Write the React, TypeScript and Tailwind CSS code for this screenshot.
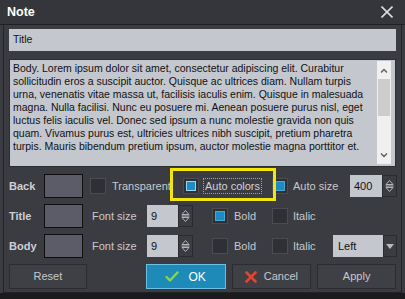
import React from "react";

const bodyLines = [
  "Body. Lorem ipsum dolor sit amet, consectetur adipiscing elit. Curabitur",
  "sollicitudin eros a suscipit auctor. Quisque ac ultrices diam. Nullam turpis",
  "urna, venenatis vitae massa ut, facilisis iaculis enim. Quisque in malesuada",
  "magna. Nulla facilisi. Nunc eu posuere mi. Aenean posuere purus nisl, eget",
  "luctus felis iaculis vel. Donec sed ipsum a nunc molestie gravida non quis",
  "quam. Vivamus purus est, ultricies ultrices nibh suscipit, pretium pharetra",
  "turpis. Mauris bibendum pretium ipsum, auctor molestie magna porttitor et.",
];

const Check = ({ on = false, focus = false }: { on?: boolean; focus?: boolean }) => (
  <div className="w-[16px] h-[16px] shrink-0 bg-[#2f3034] border border-[#4b4c52] flex items-center justify-center">
    {on && (
      <div
        className={`w-[10px] h-[10px] bg-[#1e8cc4] border ${
          focus ? "border-[#9ad6f2]" : "border-[#4aa6d2]"
        }`}
      />
    )}
  </div>
);

const Swatch = () => (
  <div className="w-[39px] h-[24px] shrink-0 bg-[#5b5c67] border border-[#0e0e10]" />
);

const Spin = ({ value, w }: { value: string; w: string }) => (
  <div className="flex h-[22px] shrink-0">
    <div className={`${w} bg-[#c4c7ce] text-[#111] text-[11px] pl-[4px] flex items-center`}>
      {value}
    </div>
    <div className="w-[15px] bg-[#3b3c42] border border-[#2a2b2f] flex items-center justify-center">
      <svg width="9" height="14" viewBox="0 0 9 14" fill="none" stroke="#b4b5ba" strokeWidth="1">
        <path d="M1 5.5 L4.5 1.5 L8 5.5 Z" />
        <path d="M0.5 7 H8.5" />
        <path d="M1 8.5 L4.5 12.5 L8 8.5 Z" />
      </svg>
    </div>
  </div>
);

const Label = ({ children }: { children: React.ReactNode }) => (
  <div className="w-[35px] shrink-0 text-[11px] font-bold text-[#cfcfd2]">{children}</div>
);

export default function App() {
  return (
    <div className="w-[405px] h-[299px] bg-[#1b1b1d] overflow-hidden font-['Liberation_Sans',Arial,sans-serif] select-none">
      {/* Title bar */}
      <div className="h-[25px] bg-[#35363b] border-b border-[#1f2023] flex items-center justify-between pl-[7px] pr-[12px]">
        <span className="text-[12.5px] font-bold text-white">Note</span>
        <svg width="12" height="12" viewBox="0 0 12 12" stroke="#dcdcde" strokeWidth="1.6">
          <path d="M0.5 0.5 L11.5 11.5 M11.5 0.5 L0.5 11.5" />
        </svg>
      </div>

      <div className="bg-[#3b3c42] px-[3px] h-[268px]">
        <div className="h-full border-x border-b border-[#222326] px-[5px] pt-[4px] text-[11px] text-[#c8c8cb]">
          {/* Title input */}
          <div className="h-[22px] bg-[#c4c7ce] text-[10.5px] text-[#151515] pl-[4px] flex items-center">
            Title
          </div>

          {/* Body textarea */}
          <div className="mt-[8px] h-[108px] bg-[#c4c7ce] border border-[#2c2d31] flex">
            <div className="flex-1 pl-[3px] pt-[2px] text-[10.5px] leading-[13px] text-[#111] whitespace-nowrap overflow-hidden">
              {bodyLines.map((l, i) => (
                <div key={i}>{l}</div>
              ))}
            </div>
            <div className="w-[14px] mt-[1px] mb-[2px] mr-[4px] bg-[#f0f0f0] flex flex-col">
              <div className="h-[18px] flex items-center justify-center">
                <svg width="8" height="5" viewBox="0 0 8 5" fill="none" stroke="#5c5c5c" strokeWidth="1.4">
                  <path d="M1 4.5 L4 1.5 L7 4.5" />
                </svg>
              </div>
              <div className="h-[37px] mx-[1px] bg-[#cdcdcd]" />
              <div className="flex-1" />
              <div className="h-[18px] flex items-center justify-center">
                <svg width="8" height="5" viewBox="0 0 8 5" fill="none" stroke="#5c5c5c" strokeWidth="1.4">
                  <path d="M1 0.5 L4 3.5 L7 0.5" />
                </svg>
              </div>
            </div>
          </div>

          {/* Row: Back */}
          <div className="relative mt-[7px] h-[24px] flex items-center">
            <Label>Back</Label>
            <Swatch />
            <div className="w-[100px] shrink-0 pl-[7px] flex items-center">
              <Check />
              <span className="ml-[6px] whitespace-nowrap">Transparent</span>
            </div>
            <div className="w-[89px] shrink-0 flex items-center">
              <Check on focus />
              <span className="ml-[4px] px-[1px] border border-dotted border-[#8fa9ba] text-[#d2d2d5] leading-[14px]">
                Auto colors
              </span>
            </div>
            <div className="w-[78px] shrink-0 flex items-center">
              <Check on />
              <span className="ml-[5px] whitespace-nowrap">Auto size</span>
            </div>
            <Spin value="400" w="w-[32px]" />
            {/* highlight frame */}
            <div className="absolute left-[161px] top-[-6px] w-[106px] h-[33px] border-[3px] border-[#f3e60c]" />
          </div>

          {/* Row: Title */}
          <div className="mt-[6px] h-[24px] flex items-center">
            <Label>Title</Label>
            <Swatch />
            <div className="w-[64px] shrink-0 pl-[9px] whitespace-nowrap">Font size</div>
            <Spin value="9" w="w-[31px]" />
            <div className="w-[19px] shrink-0" />
            <div className="w-[60px] shrink-0 flex items-center">
              <Check on />
              <span className="ml-[6px]">Bold</span>
            </div>
            <div className="flex items-center">
              <Check />
              <span className="ml-[5px]">Italic</span>
            </div>
          </div>

          {/* Row: Body */}
          <div className="mt-[6px] h-[24px] flex items-center">
            <Label>Body</Label>
            <Swatch />
            <div className="w-[64px] shrink-0 pl-[9px] whitespace-nowrap">Font size</div>
            <Spin value="9" w="w-[31px]" />
            <div className="w-[19px] shrink-0" />
            <div className="w-[60px] shrink-0 flex items-center">
              <Check />
              <span className="ml-[6px]">Bold</span>
            </div>
            <div className="w-[61px] shrink-0 flex items-center">
              <Check />
              <span className="ml-[5px]">Italic</span>
            </div>
            <div className="flex h-[22px]">
              <div className="w-[50px] bg-[#c4c7ce] text-[#111] pl-[5px] flex items-center">Left</div>
              <div className="w-[14px] bg-[#3b3c42] border border-[#2a2b2f] flex items-center justify-center">
                <svg width="8" height="5" viewBox="0 0 8 5">
                  <path d="M0 0 H8 L4 5 Z" fill="#b8b9be" />
                </svg>
              </div>
            </div>
          </div>

          {/* Buttons */}
          <div className="mt-[6px] h-[25px] flex">
            <button className="w-[78px] h-full bg-[#3f4046] border border-[#2b2c30] text-[#c8c8cb]">
              Reset
            </button>
            <button className="ml-[59px] w-[80px] h-full bg-[#1d8ab8] border border-[#6cc0e2] text-white flex items-center justify-center gap-[9px]">
              <svg width="14" height="11" viewBox="0 0 14 11" fill="none" stroke="#86d45a" strokeWidth="2.4" strokeLinecap="round" strokeLinejoin="round">
                <path d="M1.5 6 L5 9.5 L12.5 1.5" />
              </svg>
              <span className="text-[12px]">OK</span>
            </button>
            <button className="ml-[6px] w-[80px] h-full bg-[#3f4046] border border-[#2b2c30] text-[#c8c8cb] flex items-center justify-center gap-[7px]">
              <svg width="12" height="12" viewBox="0 0 12 12" fill="none" stroke="#e6432c" strokeWidth="2.6" strokeLinecap="round">
                <path d="M1.5 1.5 L10.5 10.5 M10.5 1.5 L1.5 10.5" />
              </svg>
              <span>Cancel</span>
            </button>
            <button className="ml-[6px] w-[79px] h-full bg-[#3f4046] border border-[#2b2c30] text-[#c8c8cb]">
              Apply
            </button>
          </div>
        </div>
      </div>
    </div>
  );
}
